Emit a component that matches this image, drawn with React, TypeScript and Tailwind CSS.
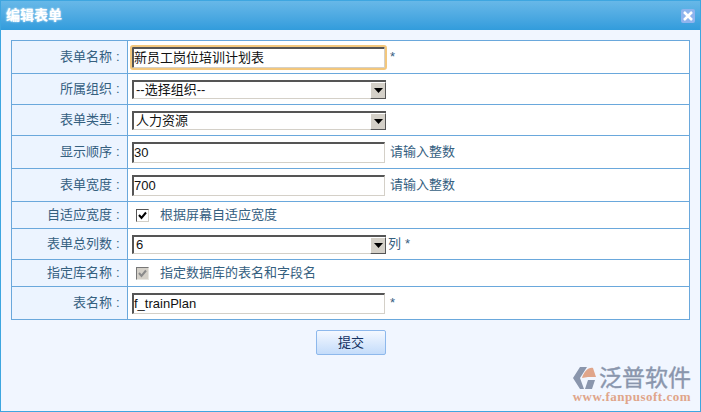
import type { ReactNode } from "react";

const cjk = "font-['Liberation_Sans','Noto_Sans_CJK_SC',sans-serif]";

const Row = ({ label, height, children }: { label: string; height: string; children: ReactNode }) => (
    <div className={`flex border-b border-[#6aa8dc] last:border-b-0 ${height}`}>
        <div className="w-[116px] shrink-0 flex items-center justify-end pr-[4px] bg-[#ecf4ff] border-r border-[#6aa8dc] text-[13px] text-[#35607f]">
            {label}
            <span className="ml-[4px] w-[7px]">:</span>
        </div>
        <div className="flex-1 flex items-center pl-[4px] bg-white text-[13px] text-[#35607f]">{children}</div>
    </div>
);

const Input = ({ value, focused }: { value: string; focused?: boolean }) => (
    <div
        className={`w-[253px] h-[21px] flex items-center bg-white text-[13px] text-[#111] border-2 border-r-[1px] border-b-[1px] border-t-[#555] border-l-[#555] border-r-[#d4d0c8] border-b-[#d4d0c8] ${
            focused ? "outline-2 outline-[#f3c77c] rounded-[1px]" : ""
        }`}
    >
        {value}
    </div>
);

const Select = ({ value }: { value: string }) => (
    <div className="w-[254px] h-[19px] flex bg-white text-[13px] text-[#111] border-t-2 border-l-2 border-[#555] border-b border-b-[#d4d0c8]">
        <span className="flex-1 flex items-center pl-[2px]">{value}</span>
        <span className="w-[16px] -mb-px flex items-center justify-center bg-[#d4d0c8] border border-t-white border-l-white border-r-[#555] border-b-[#555]">
            <svg width="9" height="5" viewBox="0 0 9 5">
                <path d="M0 0h9L4.5 5z" fill="#000" />
            </svg>
        </span>
    </div>
);

const Star = ({ gap = "ml-[5px]" }: { gap?: string }) => <span className={`${gap} text-[13px] text-[#35607f]`}>*</span>;

export default function App() {
    return (
        <div className={`relative w-[701px] h-[412px] flex flex-col bg-[#f1f6ff] border border-[#3ea6e0] ${cjk}`}>
            {/* Title bar */}
            <div className="h-[29px] shrink-0 flex items-center justify-between pl-[5px] pr-[5px] bg-gradient-to-b from-[#67b8e8] to-[#319cdc]">
                <span className="text-[14px] font-bold text-white [text-shadow:0_0_2px_#fff]">编辑表单</span>
                <span className="w-[14px] h-[14px] flex items-center justify-center rounded-[2px] bg-[#8fb4ee]">
                    <svg width="10" height="10" viewBox="0 0 10 10">
                        <path d="M1 1l8 8M9 1l-8 8" stroke="#fff" strokeWidth="2.5" />
                    </svg>
                </span>
            </div>

            {/* Form table */}
            <div className="mt-[10px] mx-[10px] border border-[#6aa8dc]">
                <Row label="表单名称" height="h-[33px]">
                    <Input value="新员工岗位培训计划表" focused />
                    <Star />
                </Row>
                <Row label="所属组织" height="h-[31px]">
                    <Select value="--选择组织--" />
                </Row>
                <Row label="表单类型" height="h-[31px]">
                    <Select value="人力资源" />
                </Row>
                <Row label="显示顺序" height="h-[33px]">
                    <Input value="30" />
                    <span className="ml-[5px]">请输入整数</span>
                </Row>
                <Row label="表单宽度" height="h-[33px]">
                    <Input value="700" />
                    <span className="ml-[5px]">请输入整数</span>
                </Row>
                <Row label="自适应宽度" height="h-[27px]">
                    <span className="ml-[4px] mr-[11px] w-[13px] h-[13px] flex items-center justify-center bg-white border border-t-[#555] border-l-[#555] border-r-[#d4d0c8] border-b-[#d4d0c8]">
                        <svg width="9" height="9" viewBox="0 0 9 9">
                            <path d="M1 4l2.5 3L8 1.5" fill="none" stroke="#000" strokeWidth="2" />
                        </svg>
                    </span>
                    根据屏幕自适应宽度
                </Row>
                <Row label="表单总列数" height="h-[31px]">
                    <Select value="6" />
                    <span className="ml-[2px]">列</span>
                    <Star gap="ml-[4px]" />
                </Row>
                <Row label="指定库名称" height="h-[27px]">
                    <span className="ml-[4px] mr-[11px] w-[13px] h-[13px] flex items-center justify-center bg-[#d4d0c8] border border-t-[#777] border-l-[#777] border-r-[#e8e6e0] border-b-[#e8e6e0]">
                        <svg width="9" height="9" viewBox="0 0 9 9">
                            <path d="M1 4l2.5 3L8 1.5" fill="none" stroke="#8a8a8a" strokeWidth="2" />
                        </svg>
                    </span>
                    指定数据库的表名和字段名
                </Row>
                <Row label="表名称" height="h-[32px]">
                    <Input value="f_trainPlan" />
                    <Star />
                </Row>
            </div>

            {/* Submit */}
            <div className="mt-[10px] flex justify-center">
                <button className="w-[70px] h-[25px] flex items-center justify-center pl-[1px] rounded-[2px] border border-[#8db8ec] bg-gradient-to-b from-[#f4f8ff] to-[#c4dcfa] text-[13px] text-[#12305f]">
                    提交
                </button>
            </div>

            {/* Watermark logo */}
            <div className="absolute right-[9px] bottom-[8px] flex flex-col items-end">
                <div className="flex items-center">
                    <svg width="25" height="23" viewBox="0 0 25 23" className="mr-[1px]">
                        <path d="M7 0h7L7 11l4 11H7L0 11z" fill="#8a96ad" />
                        <path d="M9 11C11 5 15 0 20 1l3 9H15z" fill="#e0a58a" />
                        <path d="M12 22l3-9h7l-3 9z" fill="#8a96ad" />
                    </svg>
                    <span className="text-[23px] leading-[23px] text-[#8a96ad] [-webkit-text-stroke:0.4px_#8a96ad]">泛普软件</span>
                </div>
                <span className="font-['Liberation_Serif',serif] text-[13px] leading-[13px] font-bold text-[#e0a58a] tracking-[0.5px]">
                    www.fanpusoft.com
                </span>
            </div>
        </div>
    );
}
